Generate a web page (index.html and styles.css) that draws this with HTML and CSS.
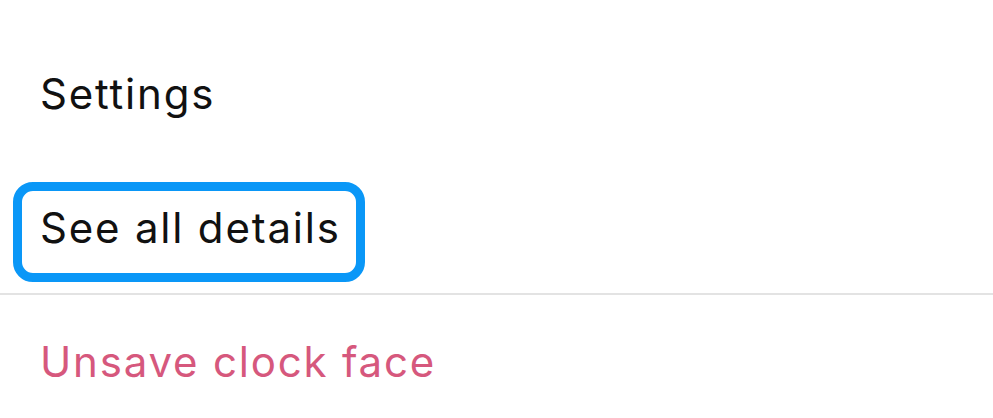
FILE: index.html
```html
<!DOCTYPE html>
<html>
<head>
    <title>Clock face menu</title>
    <link rel="stylesheet" href="styles.css">
</head>
<body>
    <div class="menu">
        <div class="menu-item">Settings</div>

        <div class="menu-item focused">
            <span class="focus-ring">See all details</span>
        </div>

        <div class="divider"></div>

        <div class="menu-item danger">Unsave clock face</div>
    </div>
</body>
</html>
```

FILE: styles.css
```css
 body {
     font-family: Inter, Lato, sans-serif;
     background-color: #ffffff;
     margin: 0;
     color: #111111;
 }

 .menu {
     padding-top: 69px;
 }

 .menu-item {
     padding-left: 40px;
     font-size: 42px;
     line-height: 50px;
     letter-spacing: 1.8px;
 }

 .focused {
     margin-top: 63px;
 }

 /* keyboard focus outline around the row */
 .focus-ring {
     display: inline-block;
     margin-left: -27px;
     padding: 12px 15px 20px 18px;
     border: 9px solid #0a97f7;
     border-radius: 20px;
 }

 .divider {
     height: 2px;
     background-color: #e3e3e3;
     margin-top: 11px;
 }

 .danger {
     color: #d6587d;
     margin-top: 42px;
 }
```
